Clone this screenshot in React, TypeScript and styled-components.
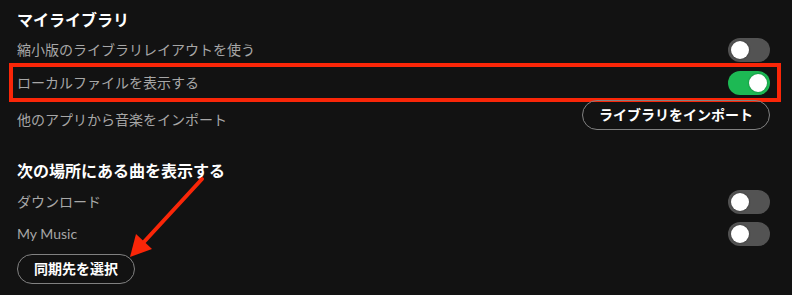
import React, { useState } from "react";
import styled, { createGlobalStyle } from "styled-components";

const GlobalStyle = createGlobalStyle`
  html, body {
    margin: 0;
    padding: 0;
    background: #121212;
  }
  body {
    font-family: "Lato", "Noto Sans CJK JP", sans-serif;
    -webkit-font-smoothing: antialiased;
  }
`;

//#region Styles
const Page = styled.div`
  position: relative;
  width: 792px;
  height: 295px;
  box-sizing: border-box;
  padding: 8px 22px 0 17px;
  background: #121212;
  overflow: hidden;
`;

const Section = styled.section<{ $gap?: number }>`
  display: flex;
  flex-direction: column;
  margin-top: ${(p) => p.$gap ?? 0}px;
`;

const SectionTitle = styled.h2<{ $below: number }>`
  margin: 0 0 ${(p) => p.$below}px;
  font-size: 16px;
  line-height: 24px;
  font-weight: 700;
  color: #ffffff;
`;

const Row = styled.div<{ $height: number; $marked?: boolean }>`
  position: relative;
  display: flex;
  align-items: center;
  justify-content: space-between;
  height: ${(p) => p.$height}px;

  ${(p) =>
    p.$marked &&
    `
    &::after {
      content: "";
      position: absolute;
      top: -3px;
      bottom: -2px;
      left: -8px;
      right: -11px;
      border: 4px solid #fa2608;
      pointer-events: none;
    }
  `}
`;

const Label = styled.span`
  font-size: 14px;
  line-height: 20px;
  color: #a7a7a7;
`;

const Track = styled.button<{ $on: boolean }>`
  display: flex;
  align-items: center;
  justify-content: ${(p) => (p.$on ? "flex-end" : "flex-start")};
  width: 42px;
  height: 24px;
  box-sizing: border-box;
  padding: 0 3px;
  border: none;
  border-radius: 12px;
  background: ${(p) => (p.$on ? "#1db954" : "#535353")};
  cursor: pointer;
`;

const Knob = styled.span`
  width: 18px;
  height: 18px;
  border-radius: 50%;
  background: #ffffff;
  box-shadow: 0 0 2px rgba(0, 0, 0, 0.45);
`;

const PillButton = styled.button<{ $top?: number }>`
  align-self: flex-start;
  height: 30px;
  margin-top: ${(p) => p.$top ?? 0}px;
  padding: 0 16px;
  border: 1px solid #818181;
  border-radius: 15px;
  background: transparent;
  color: #ffffff;
  font-family: "Lato", "Noto Sans CJK JP", sans-serif;
  font-size: 14px;
  font-weight: 700;
  line-height: 28px;
  cursor: pointer;
`;

const Annotation = styled.svg`
  position: absolute;
  left: 0;
  top: 0;
  width: 792px;
  height: 295px;
  pointer-events: none;
`;
//#endregion

const Toggle = ({ on, onChange }: { on: boolean; onChange: () => void }) => (
  <Track $on={on} onClick={onChange} aria-pressed={on}>
    <Knob />
  </Track>
);

const App = () => {
  const [settings, setSettings] = useState({
    compact: false,
    local: true,
    downloads: false,
    myMusic: false,
  });

  const flip = (key: keyof typeof settings) =>
    setSettings((s) => ({ ...s, [key]: !s[key] }));

  return (
    <Page>
      <GlobalStyle />
      <Section>
        <SectionTitle $below={2}>マイライブラリ</SectionTitle>
        <Row $height={32}>
          <Label>縮小版のライブラリレイアウトを使う</Label>
          <Toggle on={settings.compact} onChange={() => flip("compact")} />
        </Row>
        <Row $height={34} $marked>
          <Label>ローカルファイルを表示する</Label>
          <Toggle on={settings.local} onChange={() => flip("local")} />
        </Row>
        <Row $height={39}>
          <Label>他のアプリから音楽をインポート</Label>
          <PillButton>ライブラリをインポート</PillButton>
        </Row>
      </Section>

      <Section $gap={20}>
        <SectionTitle $below={3}>次の場所にある曲を表示する</SectionTitle>
        <Row $height={32}>
          <Label>ダウンロード</Label>
          <Toggle on={settings.downloads} onChange={() => flip("downloads")} />
        </Row>
        <Row $height={32}>
          <Label>My Music</Label>
          <Toggle on={settings.myMusic} onChange={() => flip("myMusic")} />
        </Row>
        <PillButton $top={4}>同期先を選択</PillButton>
      </Section>

      <Annotation viewBox="0 0 792 295">
        <line x1="202" y1="179" x2="143" y2="243" stroke="#fa2608" strokeWidth="4" strokeLinecap="round" />
        <polygon points="130,257 136,234 152,249" fill="#fa2608" />
      </Annotation>
    </Page>
  );
};

export default App;
